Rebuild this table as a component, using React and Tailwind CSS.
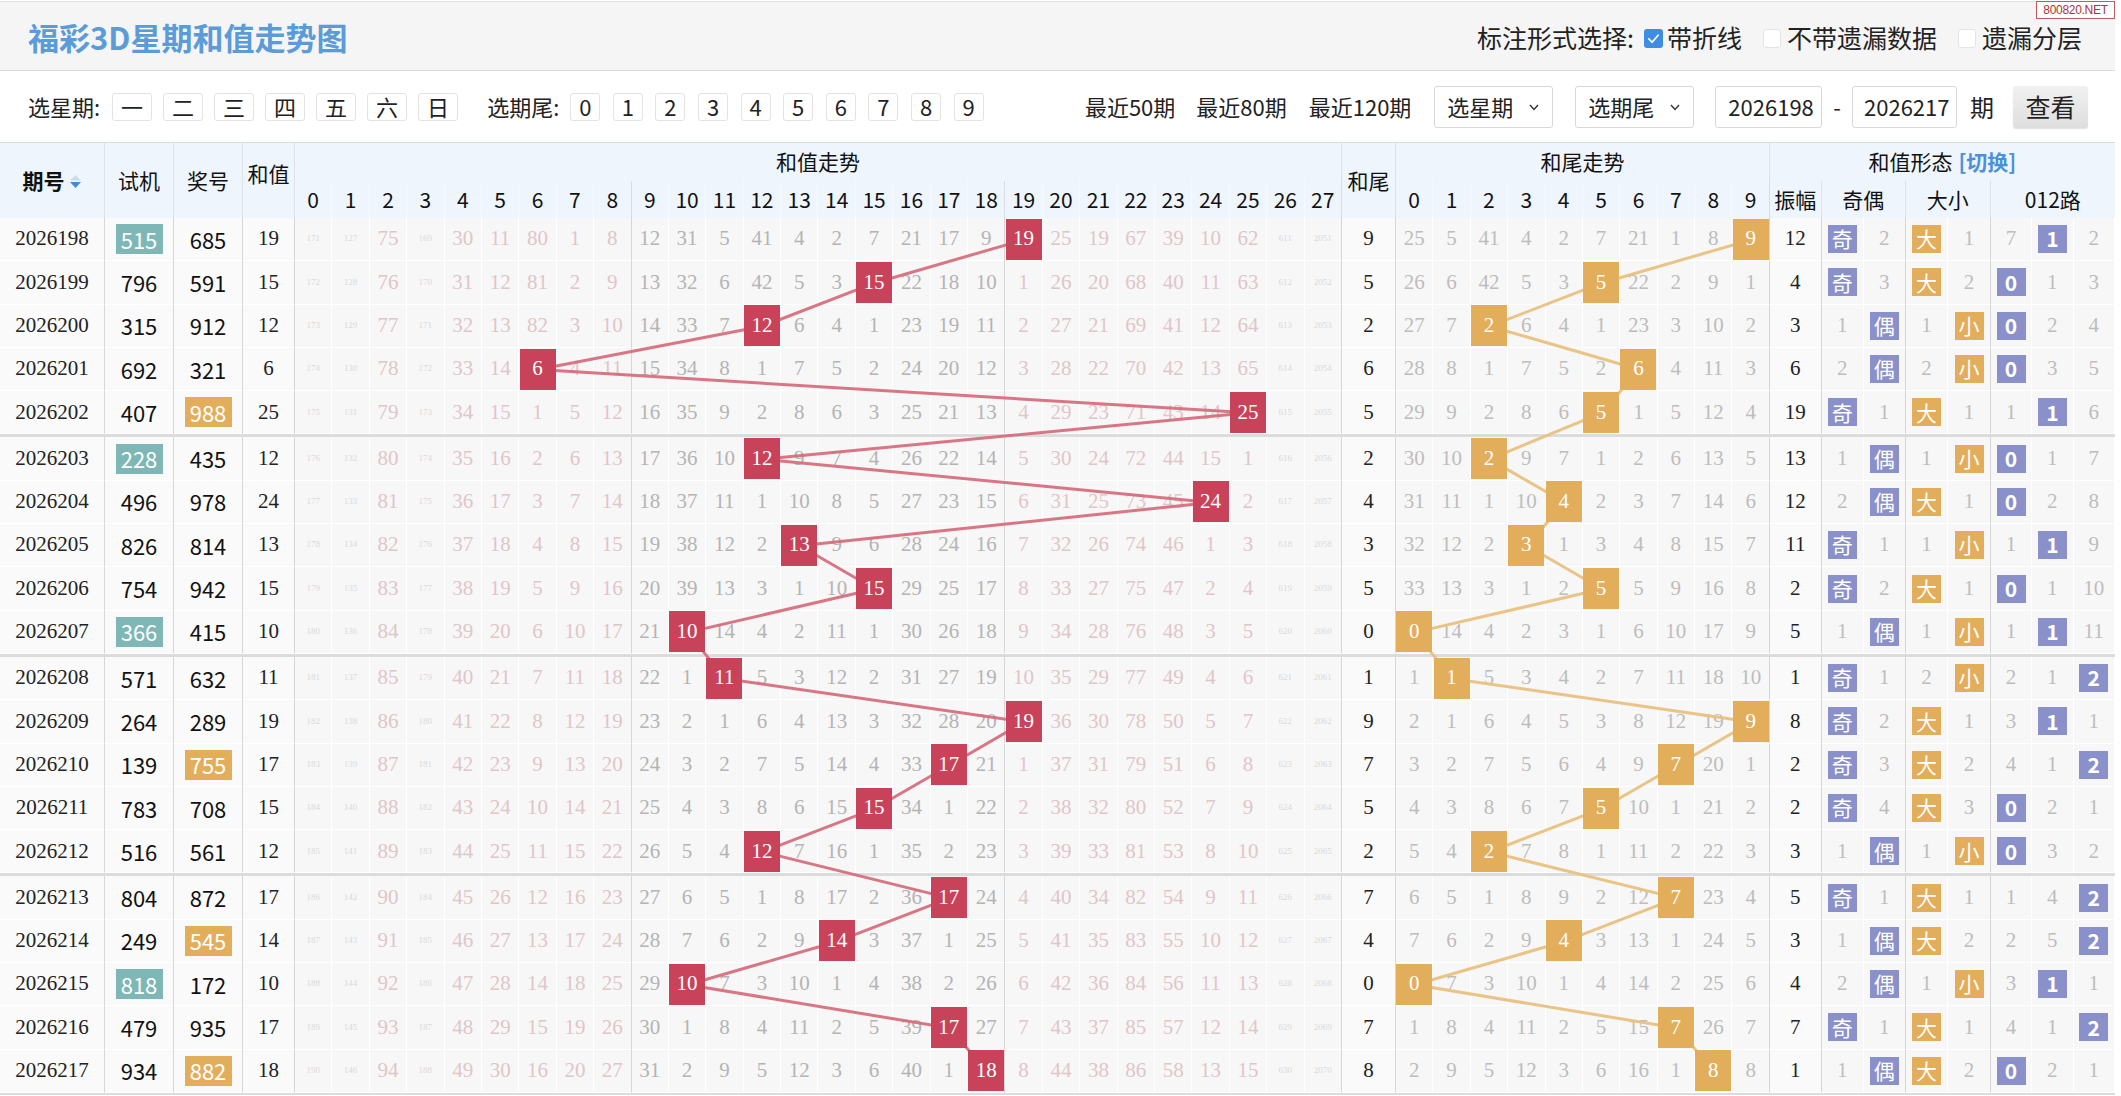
import React from "react";

const SERIF = "font-['Liberation_Serif','Noto_Serif_CJK_SC',serif]";
const SANS = "font-['Noto_Sans_CJK_SC','Noto_Sans',sans-serif]";
const GRID =
  "grid grid-cols-[105px_69px_69px_52px_repeat(28,37.4px)_54px_repeat(10,37.4px)_52px_42px_42px_42.5px_42.5px_41.33px_41.33px_41.34px]";

const ROW_H = 43.3;
const SEP = 3;
const CW = 37.4;
const SUM_X0 = 295;
const TAIL_X0 = 295 + 28 * 37.4 + 54;

const shiji = ["515","796","315","692","407","228","496","826","754","366","571","264","139","783","516","804","249","818","479","934"];
const jiang = ["685","591","912","321","988","435","978","814","942","415","632","289","755","708","561","872","545","172","935","882"];
const shijiHL = [0, 5, 9, 17];
const jiangHL = [4, 12, 16, 19];

function buildRows() {
  let sumOm = [171,127,75,169,30,11,80,1,8,12,31,5,41,4,2,7,21,17,9,0,25,19,67,39,10,62,611,2051].map((v) => v - 1);
  let tailOm = [25,5,41,4,2,7,21,1,8,0].map((v) => v - 1);
  let oe = [0, 1];
  let bs = [0, 0];
  let r3 = [6, 2, 1];
  let prev = 7;
  return jiang.map((j, i) => {
    const sum = j.split("").reduce((a, c) => a + Number(c), 0);
    const tail = sum % 10;
    sumOm = sumOm.map((v, c) => (c === sum ? 0 : v + 1));
    tailOm = tailOm.map((v, c) => (c === tail ? 0 : v + 1));
    const odd = sum % 2 === 1 ? 0 : 1;
    oe = oe.map((v, c) => (c === odd ? 0 : v + 1));
    const big = sum >= 14 ? 0 : 1;
    bs = bs.map((v, c) => (c === big ? 0 : v + 1));
    const m = sum % 3;
    r3 = r3.map((v, c) => (c === m ? 0 : v + 1));
    const amp = Math.abs(sum - prev);
    prev = sum;
    return {
      issue: String(2026198 + i),
      shiji: shiji[i],
      jiang: j,
      shijiHL: shijiHL.includes(i),
      jiangHL: jiangHL.includes(i),
      sum,
      tail,
      sumOm: [...sumOm],
      tailOm: [...tailOm],
      oe: [...oe],
      bs: [...bs],
      r3: [...r3],
      amp,
      odd,
      big,
      m,
    };
  });
}

const ROWS = buildRows();

const rowCenter = (i) => i * ROW_H + Math.floor(i / 5) * SEP + ROW_H / 2;
const BODY_H = 20 * ROW_H + 3 * SEP;

const MAJOR = new Set([0, 1, 2, 3, 12, 22, 31, 32, 42, 43, 45, 47]);
const bodyBorder = (idx) => (MAJOR.has(idx) ? "border-r-[#d6d6d6]" : "border-r-white");
const CELL = "flex items-center justify-center border-r border-b border-b-white bg-[#f7f7f7] whitespace-nowrap";

function Check({ checked }) {
  if (checked) {
    return (
      <span className="inline-flex w-[19px] h-[19px] rounded-[3px] bg-[#3d8ee3] items-center justify-center mr-[4px]">
        <svg width="15" height="15" viewBox="0 0 16 16">
          <path d="M3 8.5 L6.5 12 L13 4.5" fill="none" stroke="white" strokeWidth="1.8" strokeLinecap="round" strokeLinejoin="round" />
        </svg>
      </span>
    );
  }
  return <span className="inline-block w-[18px] h-[19px] rounded-[3px] bg-white border border-[#e4e4e4] mr-[6px]" />;
}

function SortIcon() {
  return (
    <svg width="13" height="15" viewBox="0 0 13 15" className="ml-[4px] mt-[2px]">
      <polygon points="6.5,1 12,6.5 1,6.5" fill="#c9dcef" />
      <polygon points="1,8 12,8 6.5,14" fill="#3b8de0" />
    </svg>
  );
}

function TitleBar() {
  return (
    <div className="relative h-[70px] mt-[1px] border-t border-t-[#e0e0e0] border-b border-b-[#dcdcdc] bg-[#f5f5f5] flex items-center pl-[28px] pr-[33px]">
      <div className={`${SANS} text-[31px] font-bold text-[#5b9bd8] leading-none`}>福彩3D星期和值走势图</div>
      <div className={`${SANS} ml-auto flex items-center text-[25px] text-[#222] mt-[4px]`}>
        <span className="mr-[10px]">标注形式选择:</span>
        <Check checked />
        <span className="mr-[21px]">带折线</span>
        <Check />
        <span className="mr-[21px]">不带遗漏数据</span>
        <Check />
        <span>遗漏分层</span>
      </div>
      <div className="absolute right-0 top-[-1px] w-[79px] h-[18px] border border-[#c25a5a] bg-white flex items-center justify-center text-[12px] leading-none text-[#b03232] font-['Liberation_Sans',sans-serif] tracking-[-0.3px]">
        800820.NET
      </div>
    </div>
  );
}

function FBtn({ children, w }) {
  return (
    <span className={`inline-flex ${w} h-[28px] items-center justify-center border border-[#e3e3e3] rounded-[3px] bg-white`}>
      {children}
    </span>
  );
}

function Select({ label }) {
  return (
    <div className="w-[119px] h-[42px] border border-[#d8d8d8] rounded-[3px] bg-white flex items-center pl-[12px] pr-[10px]">
      <span>{label}</span>
      <svg className="ml-auto" width="16" height="16" viewBox="0 0 16 16">
        <path d="M4 6 L8 10.5 L12 6" fill="none" stroke="#333" strokeWidth="1.4" />
      </svg>
    </div>
  );
}

function FilterBar() {
  return (
    <div className={`${SANS} h-[71px] bg-white flex items-center pl-[28px] pr-[27px] text-[22px] text-[#222]`}>
      <span>选星期:</span>
      <div className="flex gap-[11px] ml-[12px]">
        {["一", "二", "三", "四", "五", "六", "日"].map((d) => (
          <FBtn key={d} w="w-[40px]">{d}</FBtn>
        ))}
      </div>
      <span className="ml-[29px]">选期尾:</span>
      <div className="flex gap-[12.6px] ml-[11px]">
        {[0, 1, 2, 3, 4, 5, 6, 7, 8, 9].map((d) => (
          <FBtn key={d} w="w-[30px]">{d}</FBtn>
        ))}
      </div>
      <div className="ml-auto flex items-center">
        <span>最近50期</span>
        <span className="ml-[21px]">最近80期</span>
        <span className="ml-[22px]">最近120期</span>
        <div className="ml-[23px]"><Select label="选星期" /></div>
        <div className="ml-[22px]"><Select label="选期尾" /></div>
        <div className="ml-[21px] w-[107px] h-[42px] border border-[#d8d8d8] rounded-[3px] bg-white flex items-center pl-[12px]">2026198</div>
        <span className="mx-[11px]">-</span>
        <div className="w-[105px] h-[42px] border border-[#d8d8d8] rounded-[3px] bg-white flex items-center pl-[11px]">2026217</div>
        <span className="ml-[13px] text-[24px]">期</span>
        <div className="ml-[19px] w-[75px] h-[42px] rounded-[3px] bg-gradient-to-b from-[#f1f1f1] to-[#dedede] flex items-center justify-center text-[25px] text-[#222] shadow-[0_1px_1px_rgba(0,0,0,0.12)]">查看</div>
      </div>
    </div>
  );
}

function Header() {
  const hb = "border-r border-r-[#dbe2ea]";
  const sumDigits = Array.from({ length: 28 }, (_, i) => i);
  const tailDigits = Array.from({ length: 10 }, (_, i) => i);
  return (
    <div className={`${GRID} grid-rows-[38px_37px] bg-[#eef5fc] ${SANS} text-[21px] text-[#111] border-t border-t-[#dcdcdc]`}>
      <div className={`row-span-2 flex items-center justify-center font-bold ${hb}`}>
        期号<SortIcon />
      </div>
      <div className={`row-span-2 flex items-center justify-center ${hb}`}>试机</div>
      <div className={`row-span-2 flex items-center justify-center ${hb}`}>奖号</div>
      <div className={`row-span-2 flex items-center justify-center pb-[14px] ${hb}`}>和值</div>
      <div className={`col-span-28 flex items-center justify-center ${hb}`}>和值走势</div>
      <div className={`row-span-2 flex items-center justify-center ${hb}`}>和尾</div>
      <div className={`col-span-10 flex items-center justify-center ${hb}`}>和尾走势</div>
      <div className="col-span-8 flex items-center justify-center">
        和值形态<span className="ml-[6px] text-[#4a90dc] font-bold">[切换]</span>
      </div>
      {sumDigits.map((d) => (
        <div
          key={"s" + d}
          className={`flex items-center justify-center border-r ${d === 8 || d === 18 || d === 27 ? "border-r-[#d6dde5]" : "border-r-[#f6f9fd]"}`}
        >
          {d}
        </div>
      ))}
      {tailDigits.map((d) => (
        <div
          key={"t" + d}
          className={`flex items-center justify-center border-r ${d === 9 ? "border-r-[#d6dde5]" : "border-r-[#f6f9fd]"}`}
        >
          {d}
        </div>
      ))}
      <div className={`flex items-center justify-center ${hb}`}>振幅</div>
      <div className={`col-span-2 flex items-center justify-center ${hb}`}>奇偶</div>
      <div className={`col-span-2 flex items-center justify-center ${hb}`}>大小</div>
      <div className="col-span-3 flex items-center justify-center">012路</div>
    </div>
  );
}

function Badge({ children, color, bold }) {
  return (
    <span
      className={`inline-flex w-[29px] h-[28px] items-center justify-center text-white text-[21px] ${SANS} ${bold ? "font-bold" : ""} ${color}`}
    >
      {children}
    </span>
  );
}

function Omit({ v, color }) {
  if (v >= 100) {
    return <span className={`${SERIF} text-[9px] text-[#d9d9d9]`}>{v}</span>;
  }
  return <span className={`${SERIF} text-[21px] ${color}`}>{v}</span>;
}

function BodyRow({ r }) {
  let idx = 0;
  const cells = [];
  const push = (content, extra = "") => {
    cells.push(
      <div key={idx} className={`${CELL} ${bodyBorder(idx)} ${extra}`}>
        {content}
      </div>
    );
    idx++;
  };
  push(<span className={`${SERIF} text-[21px] text-[#222]`}>{r.issue}</span>, "bg-[#fafafa]");
  push(
    r.shijiHL ? (
      <span className={`inline-flex w-[47px] h-[30px] items-center justify-center bg-[#7eb7b5] text-white ${SANS} text-[22px]`}>{r.shiji}</span>
    ) : (
      <span className={`${SANS} text-[22px] text-[#111]`}>{r.shiji}</span>
    ),
    "bg-[#fafafa]"
  );
  push(
    r.jiangHL ? (
      <span className={`inline-flex w-[47px] h-[30px] items-center justify-center bg-[#e3ae5c] text-white ${SANS} text-[22px]`}>{r.jiang}</span>
    ) : (
      <span className={`${SANS} text-[22px] text-[#111]`}>{r.jiang}</span>
    ),
    "bg-[#fafafa]"
  );
  push(<span className={`${SERIF} text-[21px] text-[#222]`}>{r.sum}</span>, "bg-[#fafafa]");
  r.sumOm.forEach((v, c) => {
    if (v === 0) {
      push(
        <span className={`relative z-20 inline-flex w-[36px] h-[41px] items-center justify-center bg-[#c8435a] text-white ${SERIF} text-[21px]`}>{c}</span>
      );
    } else {
      push(<Omit v={v} color={c >= 9 && c <= 18 ? "text-[#b4b4b4]" : "text-[#dfc6c9]"} />);
    }
  });
  push(<span className={`${SERIF} text-[21px] text-[#222]`}>{r.tail}</span>, "bg-[#fafafa]");
  r.tailOm.forEach((v, c) => {
    if (v === 0) {
      push(
        <span className={`relative z-20 inline-flex w-[36px] h-[41px] items-center justify-center bg-[#e3ae5c] text-white ${SERIF} text-[21px]`}>{c}</span>
      );
    } else {
      push(<Omit v={v} color="text-[#bdbdbd]" />);
    }
  });
  push(<span className={`${SERIF} text-[21px] text-[#222]`}>{r.amp}</span>, "bg-[#fafafa]");
  ["奇", "偶"].forEach((t, c) => {
    push(r.oe[c] === 0 ? <Badge color="bg-[#8a90c9]">{t}</Badge> : <Omit v={r.oe[c]} color="text-[#bdbdbd]" />);
  });
  ["大", "小"].forEach((t, c) => {
    push(r.bs[c] === 0 ? <Badge color="bg-[#e3ae5c]">{t}</Badge> : <Omit v={r.bs[c]} color="text-[#bdbdbd]" />);
  });
  [0, 1, 2].forEach((c) => {
    push(
      r.r3[c] === 0 ? (
        <Badge color="bg-[#8a90c9]" bold>
          {c}
        </Badge>
      ) : (
        <Omit v={r.r3[c]} color="text-[#bdbdbd]" />
      )
    );
  });
  return <div className={`${GRID} h-[43.3px]`}>{cells}</div>;
}

function Lines() {
  const sumPts = ROWS.map((r, i) => `${SUM_X0 + (r.sum + 0.5) * CW},${rowCenter(i)}`).join(" ");
  const tailPts = ROWS.map((r, i) => `${TAIL_X0 + (r.tail + 0.5) * CW},${rowCenter(i)}`).join(" ");
  return (
    <svg
      className="absolute left-0 top-0 z-10 pointer-events-none"
      width="2115"
      height={BODY_H}
      viewBox={`0 0 2115 ${BODY_H}`}
    >
      <polyline points={sumPts} fill="none" stroke="#d66a7b" strokeWidth="3" strokeLinejoin="round" opacity="0.92" />
      <polyline points={tailPts} fill="none" stroke="#e8c17f" strokeWidth="3" strokeLinejoin="round" opacity="0.95" />
    </svg>
  );
}

function Body() {
  const out = [];
  ROWS.forEach((r, i) => {
    if (i > 0 && i % 5 === 0) out.push(<div key={"sep" + i} className="h-[3px] bg-[#dcdcdc]" />);
    out.push(<BodyRow key={r.issue} r={r} />);
  });
  return (
    <div className="relative">
      {out}
      <Lines />
    </div>
  );
}

export default function App() {
  return (
    <div className="w-[2121px] h-[1096px] overflow-hidden bg-white">
      <div className="w-[2115px]">
        <TitleBar />
        <FilterBar />
        <Header />
        <Body />
        <div className="h-[2px] bg-[#dcdcdc]" />
      </div>
    </div>
  );
}
